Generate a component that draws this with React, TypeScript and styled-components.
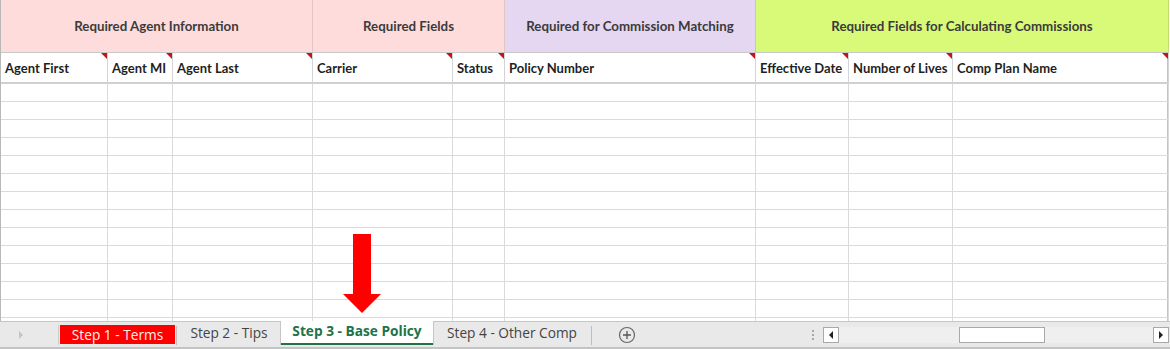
import styled, { createGlobalStyle } from "styled-components";

const GlobalStyle = createGlobalStyle`
  html, body {
    margin: 0;
    padding: 0;
    background: #ffffff;
  }
  * {
    box-sizing: border-box;
  }
`;

const columns = [
  { name: "Agent First", width: 107 },
  { name: "Agent MI", width: 65 },
  { name: "Agent Last", width: 140 },
  { name: "Carrier", width: 140 },
  { name: "Status", width: 52 },
  { name: "Policy Number", width: 251 },
  { name: "Effective Date", width: 93 },
  { name: "Number of Lives", width: 104 },
  { name: "Comp Plan Name", width: 216 },
];

const groups = [
  { title: "Required Agent Information", span: 3, bg: "#fddcdb" },
  { title: "Required Fields", span: 2, bg: "#fddcdb" },
  { title: "Required for Commission Matching", span: 1, bg: "#e5d6f1" },
  { title: "Required Fields for Calculating Commissions", span: 3, bg: "#d9f979" },
];

const ROWS = 14;

const Window = styled.div`
  width: 1170px;
  height: 349px;
  display: flex;
  flex-direction: column;
  background: #ffffff;
  overflow: hidden;
`;

const Sheet = styled.div`
  position: relative;
  flex: 1;
  overflow: hidden;
  border-left: 1px solid #b9b9b9;
`;

const Grid = styled.div`
  display: grid;
  grid-template-columns: ${columns.map((c) => `${c.width}px`).join(" ")};
  grid-auto-rows: 18px;
  grid-template-rows: 53px 31px;
  width: 1167px;
  border-right: 1px solid #c4c4c4;
  font-family: Lato, "Liberation Sans", sans-serif;
`;

const GroupCell = styled.div<{ $bg: string; $span: number }>`
  grid-column: span ${(p) => p.$span};
  background: ${(p) => p.$bg};
  display: flex;
  align-items: center;
  justify-content: center;
  padding-bottom: 1px;
  font-size: 13.3px;
  font-weight: 700;
  color: #3b3b3b;
  border-right: 1px solid rgba(0, 0, 0, 0.1);
  border-bottom: 1px solid #c8c8c8;
`;

const HeadCell = styled.div`
  position: relative;
  display: flex;
  align-items: center;
  padding: 0 0 0 4px;
  font-size: 13px;
  font-weight: 700;
  color: #1f1f1f;
  white-space: nowrap;
  border-right: 1px solid #d4d4d4;
  border-bottom: 2px solid #d0d0d0;
`;

const CommentMark = styled.span`
  position: absolute;
  top: 0;
  right: 0;
  width: 0;
  height: 0;
  border-top: 6px solid #c0161b;
  border-left: 6px solid transparent;
`;

const DataCell = styled.div`
  border-right: 1px solid #dadada;
  border-bottom: 1px solid #dadada;
`;

const ArrowSvg = styled.svg`
  position: absolute;
  left: 341px;
  top: 234px;
`;

const TabBar = styled.div`
  height: 28px;
  display: flex;
  align-items: stretch;
  background: #e9e9e9;
  border-top: 1px solid #c6c6c6;
  border-bottom: 2px solid #c3c3c3;
  font-family: "Open Sans", "Noto Sans", sans-serif;
  font-size: 13.7px;
`;

const NavArea = styled.div`
  width: 59px;
  display: flex;
  align-items: center;
  padding-left: 19px;
  border-right: 1px solid #cfcfcf;
  margin: 3px 0 2px;
`;

const NavTriangle = styled.span`
  width: 0;
  height: 0;
  border-left: 4px solid #c4c4c4;
  border-top: 4px solid transparent;
  border-bottom: 4px solid transparent;
`;

const Tab = styled.div<{ $width: number; $variant?: "red" | "active" }>`
  width: ${(p) => p.$width}px;
  display: flex;
  align-items: center;
  justify-content: center;
  padding-bottom: 4px;
  white-space: nowrap;
  color: ${(p) => (p.$variant === "red" ? "#fff0f0" : p.$variant === "active" ? "#217346" : "#444444")};
  font-weight: ${(p) => (p.$variant === "active" ? 700 : 400)};
  background: ${(p) => (p.$variant === "active" ? "#ffffff" : "transparent")};
  border-bottom: ${(p) => (p.$variant === "active" ? "2px solid #217346" : "none")};
  margin-top: ${(p) => (p.$variant === "active" ? "-1px" : "0")};
  margin-bottom: ${(p) => (p.$variant === "active" ? "2px" : "0")};
  box-shadow: ${(p) => (p.$variant === "active" ? "1px 0 0 #c6c6c6, -1px 0 0 #c6c6c6" : "none")};
`;

const RedFill = styled.div`
  display: flex;
  align-items: center;
  justify-content: center;
  align-self: stretch;
  width: 100%;
  margin: 3px 1px -1px;
  padding-bottom: 1px;
  background: #ff0000;
`;

const TabDivider = styled.div`
  width: 1px;
  background: #bdbdbd;
  margin: 4px 0 2px;
`;

const AddButton = styled.div`
  width: 70px;
  display: flex;
  align-items: center;
  justify-content: center;
`;

const Spacer = styled.div`
  flex: 1;
`;

const Dots = styled.div`
  width: 14px;
  display: flex;
  flex-direction: column;
  align-items: center;
  justify-content: center;
  gap: 2px;
  margin-right: 3px;
`;

const Dot = styled.span`
  width: 2px;
  height: 2px;
  background: #a8a8a8;
`;

const ScrollBar = styled.div`
  width: 346px;
  display: flex;
  align-items: center;
  margin-right: 1px;
`;

const ScrollButton = styled.div<{ $dir: "left" | "right" }>`
  width: 16px;
  height: 16px;
  background: #ffffff;
  border: 1px solid #a9a9a9;
  display: flex;
  align-items: center;
  justify-content: center;

  &::before {
    content: "";
    width: 0;
    height: 0;
    border-top: 4px solid transparent;
    border-bottom: 4px solid transparent;
    ${(p) => (p.$dir === "left" ? "border-right: 4px solid #222;" : "border-left: 4px solid #222;")}
  }
`;

const Track = styled.div`
  flex: 1;
  height: 16px;
  background: #efefef;
  display: flex;
  align-items: stretch;
  padding-left: 120px;
`;

const Thumb = styled.div`
  width: 86px;
  background: #ffffff;
  border: 1px solid #a9a9a9;
`;

export default function App() {
  return (
    <Window>
      <GlobalStyle />
      <Sheet>
        <Grid>
          {groups.map((g) => (
            <GroupCell key={g.title} $bg={g.bg} $span={g.span}>
              {g.title}
            </GroupCell>
          ))}
          {columns.map((c) => (
            <HeadCell key={c.name}>
              {c.name}
              <CommentMark />
            </HeadCell>
          ))}
          {Array.from({ length: ROWS * columns.length }).map((_, i) => (
            <DataCell key={i} />
          ))}
        </Grid>
        <ArrowSvg width="40" height="80" viewBox="0 0 40 80">
          <path d="M11 0 H29 V60 H39 L20 79 L1 60 H11 Z" fill="#ff0000" />
        </ArrowSvg>
      </Sheet>
      <TabBar>
        <NavArea>
          <NavTriangle />
        </NavArea>
        <Tab $width={117} $variant="red">
          <RedFill>Step 1 - Terms</RedFill>
        </Tab>
        <TabDivider />
        <Tab $width={104}>Step 2 - Tips</Tab>
        <Tab $width={152} $variant="active">
          Step 3 - Base Policy
        </Tab>
        <Tab $width={158}>Step 4 - Other Comp</Tab>
        <TabDivider />
        <AddButton>
          <svg width="18" height="18" viewBox="0 0 18 18">
            <circle cx="9" cy="9" r="7.5" fill="none" stroke="#666" strokeWidth="1.2" />
            <path d="M9 5 V13 M5 9 H13" stroke="#555" strokeWidth="1.3" />
          </svg>
        </AddButton>
        <Spacer />
        <Dots>
          <Dot />
          <Dot />
          <Dot />
        </Dots>
        <ScrollBar>
          <ScrollButton $dir="left" />
          <Track>
            <Thumb />
          </Track>
          <ScrollButton $dir="right" />
        </ScrollBar>
      </TabBar>
    </Window>
  );
}
